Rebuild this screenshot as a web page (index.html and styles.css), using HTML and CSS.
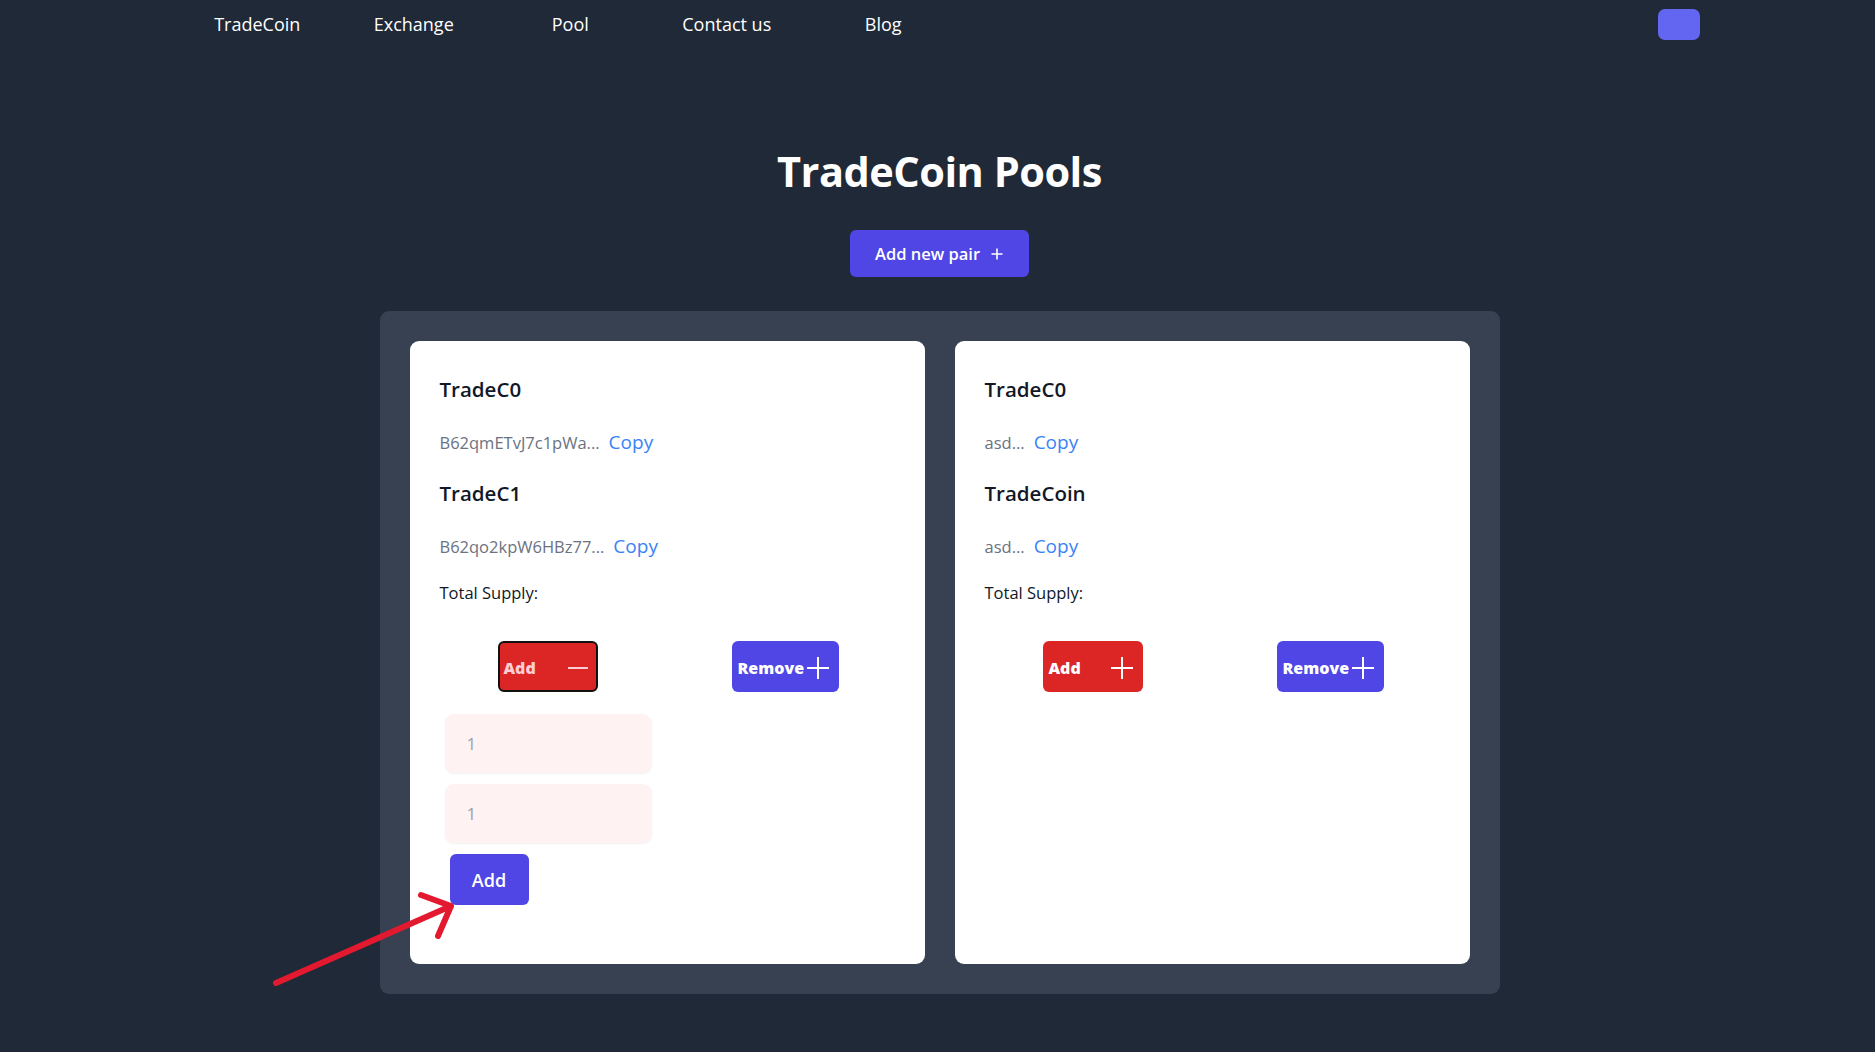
FILE: index.html
```html
<!DOCTYPE html>
<html lang="en">
<head>
<meta charset="utf-8">
<title>TradeCoin Pools</title>
<link rel="stylesheet" href="styles.css">
</head>
<body>
<header class="nav">
  <nav class="nav-links">
    <a class="nav-link" href="#">TradeCoin</a>
    <a class="nav-link" href="#">Exchange</a>
    <a class="nav-link" href="#">Pool</a>
    <a class="nav-link" href="#">Contact us</a>
    <a class="nav-link" href="#">Blog</a>
  </nav>
  <button class="wallet-btn" type="button" aria-label="Connect"></button>
</header>

<main class="page">
  <h1 class="title">TradeCoin Pools</h1>
  <div class="center">
    <button class="new-pair" type="button">Add new pair
      <svg class="new-pair-icon" viewBox="0 0 12 12" width="12" height="12"><path d="M6 0.5v11M0.5 6h11" stroke="currentColor" stroke-width="1.6" fill="none"/></svg>
    </button>
  </div>

  <section class="panel">
    <article class="card">
      <h3 class="token-name">TradeC0</h3>
      <p class="address"><span class="addr">B62qmETvJ7c1pWa...</span><a class="copy" href="#">Copy</a></p>
      <h3 class="token-name second">TradeC1</h3>
      <p class="address"><span class="addr">B62qo2kpW6HBz77...</span><a class="copy" href="#">Copy</a></p>
      <p class="supply">Total Supply:</p>
      <div class="actions">
        <button class="btn-add active" type="button"><span>Add</span>
          <svg class="icon" viewBox="0 0 20 20" width="20" height="20"><path d="M0 10h20" stroke="currentColor" stroke-width="2" fill="none"/></svg>
        </button>
        <button class="btn-remove" type="button"><span>Remove</span>
          <svg class="icon" viewBox="0 0 22 22" width="22" height="22"><path d="M11 0v22M0 11h22" stroke="currentColor" stroke-width="2" fill="none"/></svg>
        </button>
      </div>
      <form class="add-form">
        <input class="amount" type="text" placeholder="1">
        <input class="amount" type="text" placeholder="1">
        <button class="submit" type="button">Add</button>
      </form>
    </article>

    <article class="card">
      <h3 class="token-name">TradeC0</h3>
      <p class="address"><span class="addr">asd...</span><a class="copy" href="#">Copy</a></p>
      <h3 class="token-name second">TradeCoin</h3>
      <p class="address"><span class="addr">asd...</span><a class="copy" href="#">Copy</a></p>
      <p class="supply">Total Supply:</p>
      <div class="actions">
        <button class="btn-add" type="button"><span>Add</span>
          <svg class="icon" viewBox="0 0 22 22" width="22" height="22"><path d="M11 0v22M0 11h22" stroke="currentColor" stroke-width="2" fill="none"/></svg>
        </button>
        <button class="btn-remove" type="button"><span>Remove</span>
          <svg class="icon" viewBox="0 0 22 22" width="22" height="22"><path d="M11 0v22M0 11h22" stroke="currentColor" stroke-width="2" fill="none"/></svg>
        </button>
      </div>
    </article>
  </section>
</main>

<svg class="annotation" viewBox="0 0 210 120" width="210" height="120" aria-hidden="true">
  <path d="M16 103L191 26M161 15L191 26L178 56" stroke="#e3192f" stroke-width="6" stroke-linecap="round" stroke-linejoin="round" fill="none"/>
</svg>
</body>
</html>
```

FILE: styles.css
```css
* { box-sizing: border-box; }

html, body {
  margin: 0;
  padding: 0;
}

body {
  background: #1f2937;
  font-family: "Open Sans", "Noto Sans", sans-serif;
  color: #111827;
  min-height: 1052px;
  position: relative;
}

.nav {
  height: 47px;
  display: flex;
  align-items: center;
  justify-content: space-between;
  padding: 0 175px 0 179px;
}

.nav-links {
  display: flex;
}

.nav-link {
  width: 156.5px;
  text-align: center;
  color: #ffffff;
  text-decoration: none;
  font-size: 18px;
  line-height: 24px;
}

.wallet-btn {
  width: 42px;
  height: 31px;
  border: 0;
  border-radius: 7px;
  background: #6366f1;
  margin-top: 1px;
}

.page {
  width: 1120px;
  margin: 0 auto;
  position: relative;
  left: 2px;
}

.title {
  margin: 100px 0 0;
  text-align: center;
  color: #ffffff;
  font-size: 41.5px;
  line-height: 48px;
  font-weight: 700;
  letter-spacing: -0.5px;
}

.center {
  display: flex;
  justify-content: center;
  margin-top: 35px;
}

.new-pair {
  height: 47px;
  padding: 0 26px 0 25px;
  border: 0;
  border-radius: 6px;
  background: #4f46e5;
  color: #ffffff;
  font-family: inherit;
  font-size: 16.5px;
  font-weight: 600;
  display: flex;
  align-items: center;
  gap: 11px;
}

.new-pair-icon { display: block; }

.panel {
  margin-top: 34px;
  background: #374151;
  border-radius: 9px;
  padding: 30px;
  display: grid;
  grid-template-columns: 1fr 1fr;
  gap: 30px;
}

.card {
  background: #ffffff;
  border-radius: 9px;
  padding: 34px 30px 30px;
}

.token-name {
  margin: 0;
  font-size: 20.5px;
  line-height: 28px;
  font-weight: 600;
  color: #111827;
}

.token-name.second { margin-top: 22px; }

.address {
  margin: 25px 0 0;
  font-size: 16.5px;
  line-height: 28px;
  display: flex;
  align-items: baseline;
  gap: 9px;
}

.addr { color: #6b7280; }

.copy {
  color: #3b82f6;
  text-decoration: none;
  font-size: 19px;
}

.supply {
  margin: 20px 0 0;
  font-size: 16.5px;
  line-height: 24px;
  color: #111827;
}

.actions {
  margin-top: 36px;
  display: flex;
  gap: 134px;
  padding-left: 58px;
}

.btn-add,
.btn-remove {
  height: 51px;
  border: 2px solid transparent;
  border-radius: 6px;
  color: #ffffff;
  font-family: inherit;
  font-size: 16px;
  font-weight: 800;
  display: flex;
  align-items: center;
  padding: 2px 8px 0 4px;
}

.btn-add {
  width: 100px;
  background: #dc2626;
  justify-content: space-between;
}

.btn-add.active {
  border-color: #111111;
  color: #fecdd3;
}

.btn-remove {
  background: #4f46e5;
  gap: 3px;
}

.icon { display: block; }

.add-form {
  margin: 22px 0 29px;
  display: flex;
  flex-direction: column;
  align-items: flex-start;
  gap: 11px;
}

.amount {
  width: 207px;
  height: 59px;
  margin-left: 5px;
  border: 0;
  border-radius: 9px;
  background: #fef2f2;
  box-shadow: 0 1px 2px rgba(0, 0, 0, 0.06);
  padding: 0 22px;
  font-family: inherit;
  font-size: 17px;
  color: #111827;
}

.amount::placeholder { color: #9ca3af; }

.submit {
  margin-left: 10px;
  width: 79px;
  height: 51px;
  border: 0;
  border-radius: 6px;
  background: #4f46e5;
  color: #ffffff;
  font-family: inherit;
  font-size: 18px;
  font-weight: 600;
}

.annotation {
  position: absolute;
  left: 260px;
  top: 880px;
}
```
